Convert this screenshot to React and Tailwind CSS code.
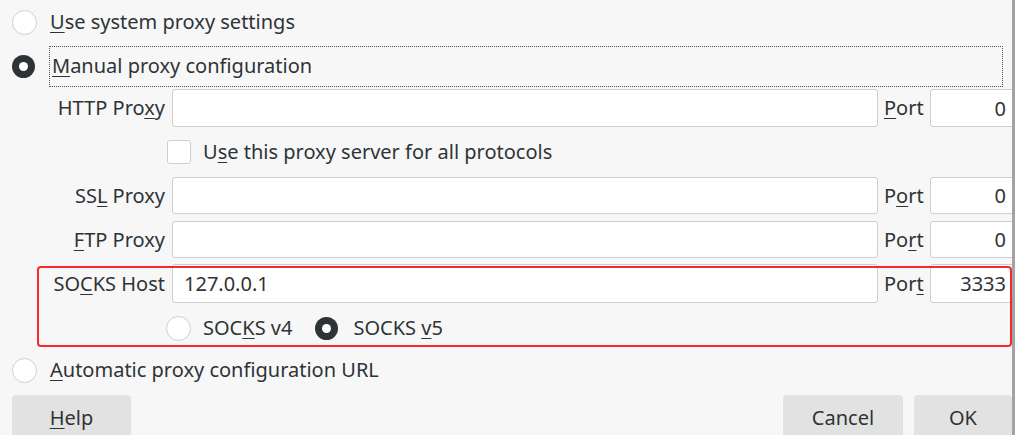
import React from "react";

const ink = "text-[#2e3436]";
const inputClass =
  "h-full rounded-[3px] border border-[#cfcfcf] bg-white text-[20px] text-[#2e3436] outline-none";

function Radio({ checked }) {
  if (checked) {
    return (
      <span className="flex h-[23px] w-[23px] shrink-0 items-center justify-center rounded-full bg-[#2e3436]">
        <span className="h-[9px] w-[9px] rounded-full bg-white" />
      </span>
    );
  }
  return <span className="h-[25px] w-[25px] shrink-0 rounded-full border border-[#d0d0d0] bg-white" />;
}

function Key({ children }) {
  return <u className="underline decoration-1 underline-offset-[3px]">{children}</u>;
}

function ProxyRow({ label, value, port, portLabel, className }) {
  return (
    <div className={`flex items-center ${className}`}>
      <div className="w-[165px] shrink-0 text-right whitespace-nowrap">{label}</div>
      <input readOnly value={value} className={`${inputClass} ml-[7px] w-[706px] shrink-0 pl-[11px]`} />
      <div className="ml-[6px] w-[46px] shrink-0">{portLabel}</div>
      <input readOnly value={port} className={`${inputClass} w-[90px] shrink-0 pr-[13px] text-right`} />
    </div>
  );
}

export default function App() {
  return (
    <div className="flex h-[435px] w-[1015px] overflow-hidden bg-[#f7f7f7]" style={{ fontFamily: '"Noto Sans", "Open Sans", sans-serif' }}>
      <div className={`relative flex w-[1012px] shrink-0 flex-col self-start overflow-hidden text-[20px] leading-[28px] ${ink}`}>
        <div className="flex h-[44px] items-center pl-[12px]">
          <Radio />
          <span className="ml-[13px]">
            <Key>U</Key>se system proxy settings
          </span>
        </div>

        <div className="flex h-[44px] items-center pl-[12px]">
          <Radio checked />
          <div className="ml-[14px] flex h-[41px] w-[954px] items-center border border-dotted border-[#555] pl-[2px]">
            <Key>M</Key>anual proxy configuration
          </div>
        </div>

        <ProxyRow
          className="mt-[1px] h-[38px]"
          label={<>HTTP Pro<Key>x</Key>y</>}
          value=""
          port="0"
          portLabel={<><Key>P</Key>ort</>}
        />

        <div className="flex h-[50px] items-center pl-[167px]">
          <span className="h-[24px] w-[24px] rounded-[3px] border border-[#cfcfcf] bg-white" />
          <span className="ml-[12px]">
            U<Key>s</Key>e this proxy server for all protocols
          </span>
        </div>

        <ProxyRow
          className="h-[37px]"
          label={<>SS<Key>L</Key> Proxy</>}
          value=""
          port="0"
          portLabel={<>P<Key>o</Key>rt</>}
        />

        <ProxyRow
          className="mt-[7px] h-[37px]"
          label={<><Key>F</Key>TP Proxy</>}
          value=""
          port="0"
          portLabel={<>Po<Key>r</Key>t</>}
        />

        <ProxyRow
          className="mt-[6px] h-[39px]"
          label={<>SO<Key>C</Key>KS Host</>}
          value="127.0.0.1"
          port="3333"
          portLabel={<>Por<Key>t</Key></>}
        />

        <div className="flex h-[50px] items-center pl-[166px]">
          <Radio />
          <span className="ml-[12px]">
            SOC<Key>K</Key>S v4
          </span>
          <span className="ml-[23px]">
            <Radio checked />
          </span>
          <span className="ml-[15px]">
            SOCKS <Key>v</Key>5
          </span>
        </div>

        <div className="flex h-[34px] items-center pl-[12px]">
          <Radio />
          <span className="ml-[13px]">
            <Key>A</Key>utomatic proxy configuration URL
          </span>
        </div>

        <div className="mt-[8px] flex h-[45px] items-start">
          <button className="ml-[12px] h-[45px] w-[119px] rounded-t-[4px] bg-[#e2e2e2] text-[20px]">
            <Key>H</Key>elp
          </button>
          <button className="ml-auto h-[45px] w-[120px] rounded-t-[4px] bg-[#e2e2e2] text-[20px]">
            Cancel
          </button>
          <button className="ml-[11px] h-[45px] w-[98px] shrink-0 rounded-t-[4px] bg-[#e2e2e2] text-[20px]">
            OK
          </button>
        </div>

        {/* annotation box */}
        <div className="pointer-events-none absolute left-[37px] top-[266px] h-[81px] w-[975px] rounded-[4px] border-2 border-[#f52a2a]" />
      </div>
      <div className="w-[3px] shrink-0 bg-[#a3a3a3]" />
    </div>
  );
}
